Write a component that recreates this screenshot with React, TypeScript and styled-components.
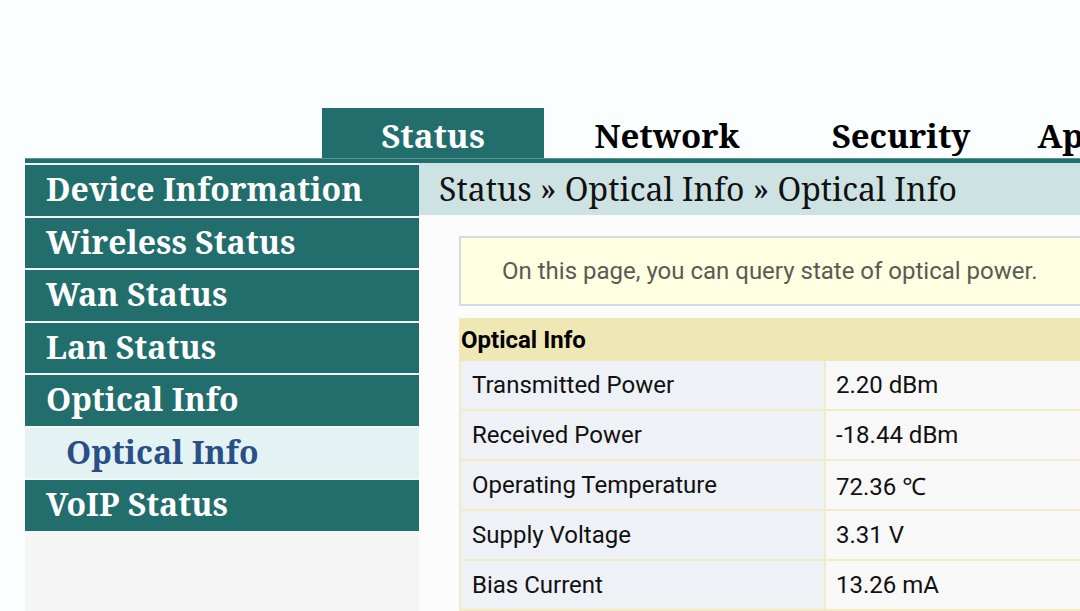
import React from 'react';
import styled, { createGlobalStyle } from 'styled-components';

const GlobalStyle = createGlobalStyle`
  html, body {
    margin: 0;
    padding: 0;
    background: #fbfefe;
    overflow: hidden;
  }
`;

const teal = '#216e6d';
const serif = `"Noto Serif", "DejaVu Serif", serif`;
const sans = `Roboto, "Noto Sans", sans-serif`;

const Page = styled.div`
  width: 1300px;
  height: 611px;
  padding: 108px 0 0 25px;
  box-sizing: border-box;
  display: flex;
  flex-direction: column;
`;

const TabBar = styled.nav`
  display: flex;
  gap: 12px;
  margin-left: 297px;
  height: 50px;
`;

const Tab = styled.div<{ $active?: boolean }>`
  width: 222px;
  flex: none;
  display: flex;
  align-items: center;
  justify-content: center;
  padding-top: 5px;
  box-sizing: border-box;
  font-family: ${serif};
  font-weight: 700;
  font-size: 33px;
  color: ${p => (p.$active ? '#ffffff' : '#000000')};
  background: ${p => (p.$active ? teal : 'transparent')};
  white-space: nowrap;
`;

const TabRule = styled.div`
  height: 4px;
  border-top: 1px solid #5a9594;
  background: ${teal};
`;

const Body = styled.div`
  flex: 1;
  display: flex;
  min-height: 0;
`;

const Sidebar = styled.aside`
  width: 394px;
  flex: none;
  background: #f5f5f5;
  display: flex;
  flex-direction: column;
`;

const MenuItem = styled.div<{ $sub?: boolean }>`
  height: 50.5px;
  margin-top: 2px;
  box-sizing: border-box;
  padding-bottom: 3px;
  display: flex;
  align-items: center;
  padding-left: ${p => (p.$sub ? '41px' : '21px')};
  font-family: ${serif};
  font-weight: 700;
  font-size: 32px;
  color: ${p => (p.$sub ? '#2a4f86' : '#ffffff')};
  background: ${p => (p.$sub ? '#e3f3f3' : teal)};
  white-space: nowrap;
`;

const Main = styled.main`
  flex: 1;
  display: flex;
  flex-direction: column;
  background: #fdfcfc;
`;

const Breadcrumb = styled.div`
  height: 52px;
  box-sizing: border-box;
  padding-bottom: 2px;
  display: flex;
  align-items: center;
  padding-left: 20px;
  background: #cde3e3;
  font-family: ${serif};
  font-size: 32px;
  color: #111;
  white-space: nowrap;
`;

const Content = styled.div`
  padding: 21px 0 0 40px;
  display: flex;
  flex-direction: column;
  gap: 12px;
`;

const InfoBox = styled.div`
  height: 70px;
  box-sizing: border-box;
  border: 2px solid #cfdde4;
  background: #ffffe1;
  display: flex;
  align-items: center;
  padding-left: 41px;
  font-family: ${sans};
  font-size: 24px;
  color: #5a5a55;
  white-space: nowrap;
`;

const Table = styled.div`
  display: flex;
  flex-direction: column;
`;

const TableHead = styled.div`
  height: 43px;
  display: flex;
  align-items: center;
  padding-left: 2px;
  background: #f0e8b4;
  font-family: ${sans};
  font-weight: 700;
  font-size: 24px;
  color: #000;
`;

const Row = styled.div`
  display: grid;
  grid-template-columns: 365px 1fr;
  height: 50px;
  border-left: 2px solid #f3ebc6;
  border-bottom: 2px solid #f3ebc6;
  box-sizing: border-box;
`;

const Cell = styled.div<{ $label?: boolean }>`
  display: flex;
  align-items: center;
  padding-left: ${p => (p.$label ? '11px' : '10px')};
  background: ${p => (p.$label ? '#eef1f6' : '#f8f8f8')};
  border-right: ${p => (p.$label ? '2px solid #f3ebc6' : 'none')};
  font-family: ${sans};
  font-size: 24px;
  color: #111;
  white-space: nowrap;
`;

const tabs = ['Status', 'Network', 'Security', 'Application'];

const menu: { label: string; sub?: boolean }[] = [
  { label: 'Device Information' },
  { label: 'Wireless Status' },
  { label: 'Wan Status' },
  { label: 'Lan Status' },
  { label: 'Optical Info' },
  { label: 'Optical Info', sub: true },
  { label: 'VoIP Status' },
];

const rows = [
  ['Transmitted Power', '2.20 dBm'],
  ['Received Power', '-18.44 dBm'],
  ['Operating Temperature', '72.36 ℃'],
  ['Supply Voltage', '3.31 V'],
  ['Bias Current', '13.26 mA'],
];

export default function App() {
  return (
    <>
      <GlobalStyle />
      <Page>
        <TabBar>
          {tabs.map((t, i) => (
            <Tab key={t} $active={i === 0}>
              {t}
            </Tab>
          ))}
        </TabBar>
        <TabRule />
        <Body>
          <Sidebar>
            {menu.map((m, i) => (
              <MenuItem key={i} $sub={m.sub}>
                {m.label}
              </MenuItem>
            ))}
          </Sidebar>
          <Main>
            <Breadcrumb>Status » Optical Info » Optical Info</Breadcrumb>
            <Content>
              <InfoBox>On this page, you can query state of optical power.</InfoBox>
              <Table>
                <TableHead>Optical Info</TableHead>
                {rows.map(([k, v]) => (
                  <Row key={k}>
                    <Cell $label>{k}</Cell>
                    <Cell>{v}</Cell>
                  </Row>
                ))}
              </Table>
            </Content>
          </Main>
        </Body>
      </Page>
    </>
  );
}
